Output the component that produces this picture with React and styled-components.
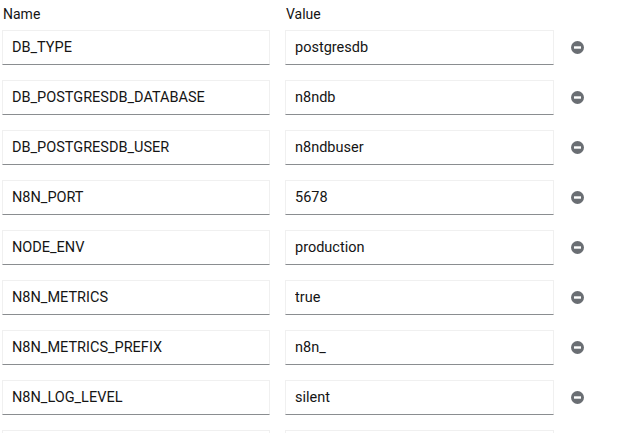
import React from 'react'
import styled, { createGlobalStyle } from 'styled-components'

const rows = [
  ['DB_TYPE', 'postgresdb'],
  ['DB_POSTGRESDB_DATABASE', 'n8ndb'],
  ['DB_POSTGRESDB_USER', 'n8ndbuser'],
  ['N8N_PORT', '5678'],
  ['NODE_ENV', 'production'],
  ['N8N_METRICS', 'true'],
  ['N8N_METRICS_PREFIX', 'n8n_'],
  ['N8N_LOG_LEVEL', 'silent'],
  ['', ''],
]

export default function App() {
  return (
    <>
      <Global />
      <Wrapper>
        <Grid>
          <Label>Name</Label>
          <Label>Value</Label>
          <span />
          {rows.map(([name, value], i) => (
            <React.Fragment key={i}>
              <Field readOnly value={name} />
              <Field readOnly value={value} />
              <Remove aria-label='Remove'>
                <MinusCircle />
              </Remove>
            </React.Fragment>
          ))}
        </Grid>
      </Wrapper>
    </>
  )
}

function MinusCircle() {
  return (
    <svg width='13' height='13' viewBox='0 0 13 13'>
      <circle cx='6.5' cy='6.5' r='6.5' fill='#6a6e73' />
      <rect x='3' y='5.3' width='7' height='2.4' fill='#fff' />
    </svg>
  )
}

const Global = createGlobalStyle`
  body {
    margin: 0;
    background: #fff;
    overflow: hidden;
    font-family: Roboto, "Liberation Sans", sans-serif;
  }
`
const Wrapper = styled.div`
  width: 635px;
  height: 433px;
  overflow: hidden;
  padding-left: 2px;
  box-sizing: border-box;
`
const Grid = styled.div`
  display: grid;
  grid-template-columns: 268px 269px 46px;
  column-gap: 15px;
  row-gap: 15px;
  align-items: center;
`
const Label = styled.div`
  font-size: 14px;
  line-height: 20px;
  color: #151515;
  padding: 4px 0 0 1px;
  margin-bottom: -9px;
`
const Field = styled.input`
  box-sizing: border-box;
  width: 100%;
  height: 35px;
  margin: 0;
  padding: 0 8px 0 9px;
  border: 1px solid #f0f0f0;
  border-bottom-color: #8a8d90;
  border-radius: 0;
  background: #fff;
  font-family: Roboto, "Liberation Sans", sans-serif;
  font-size: 14.5px;
  color: #151515;
  outline: none;
`
const Remove = styled.button`
  display: flex;
  align-items: center;
  justify-content: center;
  margin-left: -15px;
  width: 46px;
  height: 35px;
  padding: 0;
  border: none;
  background: none;
  cursor: pointer;
`
